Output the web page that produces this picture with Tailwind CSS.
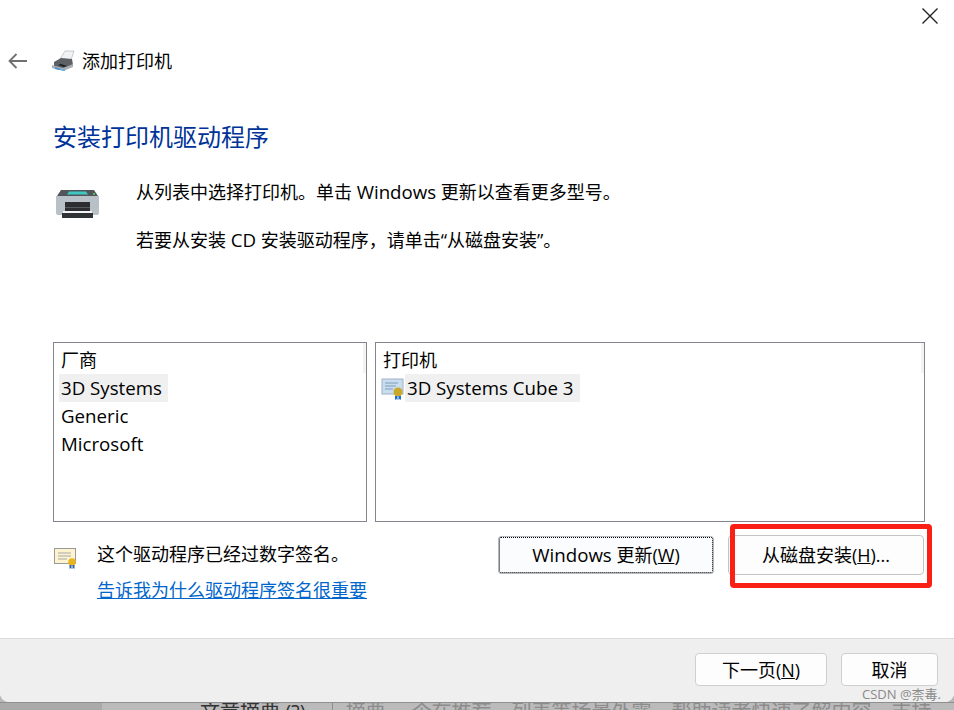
<!DOCTYPE html>
<html lang="zh-CN">
<head>
  <meta charset="UTF-8">
  <title>添加打印机</title>
  <script src="https://cdn.jsdelivr.net/npm/@tailwindcss/browser@4"></script>
</head>
<body class="bg-[#b9b9b9]">
  <div class="relative w-[954px] h-[710px] overflow-hidden font-['Open_Sans','Noto_Sans_CJK_SC',sans-serif] text-[18px] leading-[28px] text-black">
    <!-- 窗口 -->
    <div class="flex flex-col h-[702px] bg-white rounded-b-[9px] overflow-hidden">
      <div class="flex justify-end h-[32px] pt-[8px] pr-[16px]">
        <svg width="16" height="16" viewBox="0 0 16 16" fill="none" stroke="#222" stroke-width="1.4"><path d="M0.5 0.5 15.5 15.5M15.5 0.5 0.5 15.5"/></svg>
      </div>

      <div class="flex items-center h-[58px] pl-[8px]">
        <svg width="20" height="16" viewBox="0 0 20 16" fill="none" stroke="#707070" stroke-width="1.8"><path d="M19 8H1.5M8.500 1 1.500 8l7 7"/></svg>
        <svg class="ml-[23px]" width="24" height="22" viewBox="0 0 24 22">
          <path d="M9 9 14 1l9 0-3 9z" fill="#f1f2f4" stroke="#a8adb3" stroke-width=".6"/>
          <path d="M3 12 10 8l11 1 1 6-9 5-10-2z" fill="#5d6166"/>
          <path d="M1 15l11 3 10-4v3l-10 4-11-3z" fill="#a9aeb4"/>
          <path d="M7 15l6 2 3-1-6-2z" fill="#1b1e21"/>
          <path d="M4 17l3 1 3 1-1 1-5-1z" fill="#3f8fd6"/>
          <path d="M11 19h3v2h-3z" fill="#5fb3e8"/>
        </svg>
        <span class="ml-[7px]">添加打印机</span>
      </div>

      <div class="ml-[53px] mt-[30px] text-[24px] leading-[34px] text-[#003399]">安装打印机驱动程序</div>

      <div class="flex mt-[24px] pl-[56px]">
        <svg class="mt-[10px]" width="43" height="32" viewBox="0 0 43 32">
          <path d="M5 2h33l4 6H1z" fill="#50565c"/>
          <path d="M13 3.500h17l2 3H11z" fill="#3fc8c0"/>
          <path d="M0 8h43v17a2 2 0 0 1-2 2H2a2 2 0 0 1-2-2z" fill="#b9c1c8"/>
          <circle cx="38" cy="6" r="1" fill="#4fdc5a"/>
          <path d="M9 14h25v10H9z" fill="#2b2d30"/>
          <path d="M9 19h25v1H9z" fill="#55585c"/>
          <path d="M7 23h29v2H7z" fill="#f4f5f6"/>
          <path d="M6 25h31v5H6z" fill="#303336"/>
        </svg>
        <div class="ml-[37px]">
          <p class="h-[28px]">从列表中选择打印机。单击 <span class="text-[18.7px]">Windows</span> 更新以查看更多型号。</p>
          <p class="h-[28px] mt-[20px]">若要从安装 <span class="text-[18.7px]">CD</span> 安装驱动程序，请单击“从磁盘安装”。</p>
        </div>
      </div>

      <div class="flex gap-[8px] mt-[88px] ml-[53px] mr-[29px] h-[180px]">
        <div class="relative w-[314px] border border-[#85858d] pt-[3px] pl-[5px]">
          <div class="pl-[2px]">厂商</div>
          <div class="w-fit pl-[2px] pr-[6px] bg-[#f0f0f0] text-[18.7px]">3D Systems</div>
          <div class="pl-[2px] text-[18.7px]">Generic</div>
          <div class="pl-[2px] text-[18.7px]">Microsoft</div>
          <div class="absolute top-0 right-0 w-[3px] h-[30px] bg-[#f3f3f3]"></div>
        </div>
        <div class="relative flex-1 border border-[#85858d] pt-[3px] pl-[5px]">
          <div class="pl-[2px]">打印机</div>
          <div class="flex items-center">
            <svg width="24" height="24" viewBox="0 0 24 24">
              <rect x="1" y="3" width="21" height="15" fill="#c9ddf0" stroke="#9fb2c4"/>
              <path d="M4 7h13M4 10h11M4 13h8" stroke="#7f9db8"/>
              <circle cx="17" cy="16" r="4.500" fill="#c9a92a"/>
              <path d="M14 20h2.500v4l-1.200-1-1.300 1zM17.500 20H20v4l-1.200-1-1.300 1z" fill="#1f6fd0"/>
            </svg>
            <span class="pl-[2px] pr-[6px] bg-[#f0f0f0] text-[18.7px]">3D Systems Cube 3</span>
          </div>
          <div class="absolute top-0 right-0 w-[3px] h-[30px] bg-[#f3f3f3]"></div>
        </div>
      </div>

      <div class="flex mt-[13px] ml-[54px]">
        <svg class="mt-[12px]" width="24" height="22" viewBox="0 0 24 22">
          <rect x="0.500" y="1.500" width="21" height="15" fill="#fdf3cf" stroke="#9b9b9b"/>
          <path d="M4 6h13M4 9h13M4 12h9" stroke="#a8a8a8"/>
          <circle cx="18" cy="15" r="3.800" fill="#e8b51f"/>
          <path d="M15.500 18h2v4l-1-1-1 1zM18.500 18h2v4l-1-1-1 1z" fill="#2a5fa8"/>
        </svg>
        <div class="ml-[19px] pt-[5px]">
          <p>这个驱动程序已经过数字签名。</p>
          <a href="#" class="block mt-[8px] text-[#0066cc] underline">告诉我为什么驱动程序签名很重要</a>
        </div>
        <div class="flex ml-[131px] gap-[14px] h-[40px]">
          <button class="w-[216px] h-[38px] mt-[1px] rounded-[3px] bg-[#fbfcfe] border border-[#b4b8bd] outline-1 outline-dotted outline-black -outline-offset-2"><span class="text-[18.7px]">Windows</span> 更新(<u>W</u>)</button>
          <button class="w-[196px] rounded-[4px] bg-[#fdfdfd] border border-[#c4c4c4]">从磁盘安装(<u>H</u>)...</button>
        </div>
      </div>

      <div class="flex-1 mt-[34px] flex justify-end gap-[14px] pt-[14px] pr-[16px] bg-[#efefef] border-t border-[#dadada]">
        <button class="w-[132px] h-[33px] rounded-[4px] bg-[#fdfdfd] border border-[#cfcfcf]">下一页(<u>N</u>)</button>
        <button class="w-[97px] h-[33px] rounded-[4px] bg-[#fdfdfd] border border-[#cfcfcf]">取消</button>
      </div>
    </div>

    <!-- 窗口下方露出的页面 -->
    <div class="flex h-[8px] overflow-hidden bg-[#bbbbbb] border-t border-[#8f8f8f] text-[20px]">
      <div class="w-[102px] h-full bg-[#aaaaaa]"></div>
      <div class="ml-[98px] -mt-[5px] text-[#333333] whitespace-nowrap">文章摘要 (?)</div>
      <div class="ml-[26px] -mt-[5px] pl-[13px] border-l border-[#8f8f8f] text-[#8c8c8c] whitespace-nowrap">摘要，<span class="ml-[6px]">个在推荐，列表等场景外露，帮助读者快速了解内容，支持</span></div>
    </div>

    <!-- 标注框与水印 -->
    <div class="absolute left-[730px] top-[524px] w-[202px] h-[64px] border-[5px] border-[#fa2015] rounded-[4px]"></div>
    <div class="absolute left-[862px] top-[686px] text-[13px] leading-[16px] text-[#8a8a8a]">CSDN @柰毒.</div>
  </div>
</body>
</html>
